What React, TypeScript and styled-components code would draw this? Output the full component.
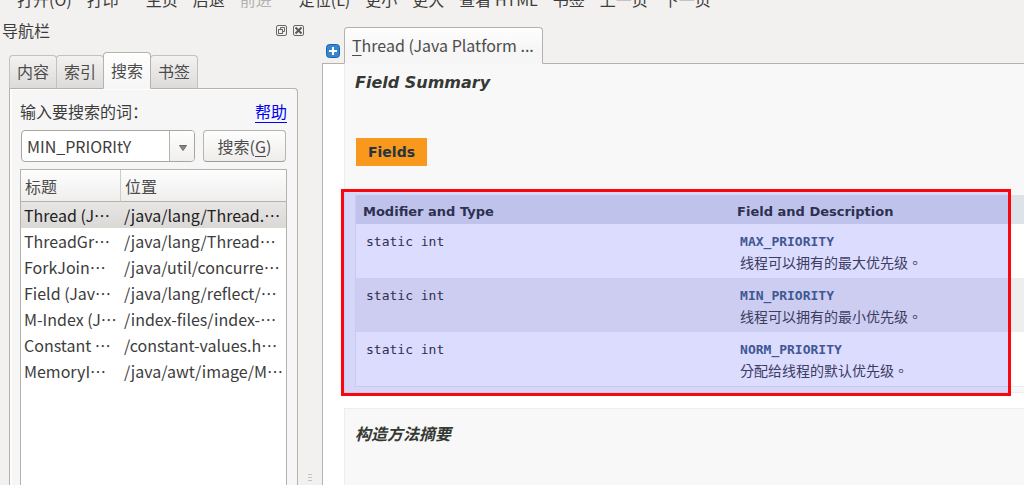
import React, { Fragment, useState } from "react";
import styled, { createGlobalStyle, css } from "styled-components";

const line = "#b5b2ac";
const chrome = "#f2f1ef";

const GlobalStyle = createGlobalStyle`
  *, *::before, *::after { box-sizing: border-box; }
  html, body { margin: 0; height: 100%; overflow: hidden; }
  #root { height: 100%; }
  body {
    background: ${chrome};
    color: #3c3c3c;
    font: 16px/24px "Noto Sans CJK SC", "Noto Sans", sans-serif;
  }
  button, input { font: inherit; color: inherit; margin: 0; }
`;

const Shell = styled.div`
  display: flex;
  flex-direction: column;
  height: 100vh;
  overflow: hidden;
`;

const Toolbar = styled.div`
  display: flex;
  align-items: flex-end;
  flex: none;
  gap: 15px;
  height: 11px;
  margin-bottom: 1px;
  padding-left: 17px;
  overflow: hidden;
`;

const ToolButton = styled.button<{ $group?: boolean }>`
  flex: none;
  padding: 0;
  margin-left: ${(p) => (p.$group ? 12 : 0)}px;
  border: 0;
  background: none;
  white-space: nowrap;
  line-height: 24px;
  &:disabled { color: #b4b2b0; }
`;

const Main = styled.div`
  display: flex;
  flex: 1;
  min-height: 0;
`;

const Dock = styled.aside`
  display: flex;
  flex-direction: column;
  flex: none;
  width: 308px;
  padding-top: 7px;
`;

const DockTitle = styled.div`
  display: flex;
  align-items: center;
  gap: 5px;
  height: 24px;
  padding: 0 3px 0 2px;
  & > span { flex: 1; padding-bottom: 2px; }
`;

const IconButton = styled.button`
  display: flex;
  padding: 0;
  border: 0;
  background: none;
`;

const Tabs = styled.div`
  display: flex;
  align-items: flex-end;
  height: 46px;
  margin-bottom: -1px;
  padding-left: 9px;
`;

const Tab = styled.button<{ $active?: boolean }>`
  position: relative;
  width: 48px;
  height: 34px;
  padding: 0 0 2px;
  margin-right: -1px;
  border: 1px solid #c4c1bc;
  border-bottom-color: ${line};
  border-radius: 4px 4px 0 0;
  background: linear-gradient(#f3f2f1, #dddbd9);
  color: #4c4c4c;
  ${(p) =>
    p.$active &&
    css`
      z-index: 1;
      height: 37px;
      border-color: ${line};
      border-bottom-color: #f6f6f6;
      background: linear-gradient(#fefefe, #f6f6f6);
    `}
`;

const Panel = styled.div`
  display: flex;
  flex-direction: column;
  flex: 1;
  margin: 0 10px 0 9px;
  padding: 10px 10px 0;
  border: 1px solid ${line};
  border-bottom: 0;
  border-radius: 0 4px 0 0;
  background: #f5f6f5;
  box-shadow: inset 2px 1px 0 #fcfcfc;
`;

const Prompt = styled.div`
  display: flex;
  justify-content: space-between;
  height: 31px;
  a { color: #0000f5; text-underline-offset: 4px; text-decoration-thickness: 1px; }
`;

const SearchRow = styled.div`
  display: flex;
  gap: 8px;
  height: 32px;
  padding: 0 1px;
`;

const Combo = styled.div`
  display: flex;
  flex: 1;
  min-width: 0;
  border: 1px solid #aaa69f;
  border-radius: 4px;
  background: #fff;
  overflow: hidden;
`;

const ComboInput = styled.input`
  flex: 1;
  min-width: 0;
  padding: 0 5px;
  border: 0;
  outline: 0;
  background: none;
`;

const ComboArrow = styled.button`
  display: flex;
  align-items: center;
  justify-content: center;
  width: 25px;
  padding: 3px 0 0 2px;
  border: 0;
  border-left: 1px solid ${line};
  background: linear-gradient(#fefefe, #f0efee);
`;

const PushButton = styled.button`
  width: 83px;
  padding: 0;
  border: 1px solid #b8b5af;
  border-bottom-color: #a09d96;
  border-radius: 4px;
  background: linear-gradient(#fefefe, #eeedeb);
  color: #4c4c4c;
`;

const Accel = styled.span`
  text-decoration: underline;
  text-decoration-thickness: 1px;
  text-underline-offset: 3px;
`;

const Results = styled.div`
  flex: 1;
  margin-top: 7px;
  border: 1px solid ${line};
  border-bottom: 0;
  background: #fff;
`;

const ResultTable = styled.table`
  width: 100%;
  table-layout: fixed;
  border-collapse: separate;
  border-spacing: 0;
  white-space: nowrap;
  th, td { overflow: hidden; text-align: left; }
  th {
    height: 32px;
    padding: 1px 4px 0;
    border-bottom: 1px solid ${line};
    background: linear-gradient(#fefefe, #efeeed);
    color: #4c4c4c;
    font-weight: 400;
  }
  th + th { border-left: 1px solid #cfccc8; }
  td {
    height: 26px;
    padding: 0 0 0 3px;
    font-family: "Noto Sans CJK TC", "Noto Sans CJK SC", sans-serif;
  }
  td + td { padding-left: 4px; }
  col:first-child { width: 99px; }
`;

const ResultRow = styled.tr<{ $selected?: boolean }>`
  background: ${(p) => (p.$selected ? "linear-gradient(#e8e6e4, #dbd9d6)" : "none")};
  color: ${(p) => (p.$selected ? "#202020" : "inherit")};
`;

const Splitter = styled.div`
  display: flex;
  flex-direction: column;
  justify-content: flex-end;
  gap: 2px;
  flex: none;
  width: 14px;
  padding-bottom: 4px;
`;

const Grip = styled.i`
  width: 4px;
  height: 1px;
  background: #c6c3bf;
`;

const Browser = styled.main`
  display: flex;
  flex-direction: column;
  flex: 1;
  min-width: 0;
`;

const BrowserTabs = styled.div`
  display: flex;
  align-items: flex-end;
  gap: 4px;
  height: 52px;
  margin-bottom: -1px;
  padding-left: 4px;
`;

const AddTab = styled(IconButton)`
  margin-bottom: 6px;
`;

const PageTab = styled.button`
  position: relative;
  z-index: 1;
  height: 37px;
  width: 199px;
  padding: 0 7px 2px;
  border: 1px solid ${line};
  border-bottom-color: #f7f7f7;
  border-radius: 4px 4px 0 0;
  background: linear-gradient(#fefefe, #f6f6f6 60%);
  color: #4c4c4c;
  text-align: left;
  white-space: nowrap;
`;

const Viewport = styled.div`
  flex: 1;
  min-height: 0;
  padding-left: 21px;
  border: 1px solid ${line};
  border-width: 1px 0 0 1px;
  background: #fff;
  color: #353833;
  font-family: "DejaVu Sans", "Noto Sans CJK SC", sans-serif;
  overflow: hidden;
`;

const Section = styled.section`
  padding: 7px 0 5px 10px;
  margin-bottom: 15px;
  border: 1px solid #ededed;
  border-right: 0;
  background: #f8f8f8;
  &:first-child { border-top: 0; }
  &:last-child { min-height: 240px; padding-top: 14px; }
`;

const Heading = styled.h3`
  margin: 0;
  font-size: 16px;
  line-height: 24px;
  font-style: italic;
  font-weight: 700;
`;

const Caption = styled.div`
  display: inline-block;
  margin: 43px 1px 29px;
  padding: 0 12px;
  background: #f8981d;
  color: #253441;
  font-size: 14px;
  line-height: 28px;
  font-weight: 700;
  vertical-align: top;
`;

const Marked = styled.div`
  position: relative;
`;

const Mark = styled.div`
  position: absolute;
  inset: -6px 13px -9px -14px;
  border: 3px solid #fb0510;
  background: rgba(0, 0, 255, 0.137);
  pointer-events: none;
`;

const FieldTable = styled.table`
  width: 100%;
  table-layout: fixed;
  border-collapse: separate;
  border-spacing: 0;
  border: 1px solid #ebebeb;
  border-width: 0 0 1px 1px;
  th {
    height: 29px;
    padding: 5px 7px 0;
    background: #dee3e9;
    font-size: 13px;
    line-height: 16px;
    text-align: left;
  }
  th:first-child { width: 56%; }
  td {
    height: 54px;
    padding: 8px 10px 0;
    background: #fff;
    vertical-align: top;
  }
  tr:nth-child(even) td { background: #eeeeef; }
`;

const Code = styled.code`
  display: block;
  font: 13px/20px "DejaVu Sans Mono", monospace;
  a { color: #4a6782; font-weight: 700; text-decoration: none; }
`;

const Description = styled.div`
  font: 14px/20px "Noto Sans CJK TC", sans-serif;
  color: #474747;
`;

const tools = [
  { label: "打开(O)" },
  { label: "打印" },
  { label: "主页", group: true },
  { label: "后退" },
  { label: "前进", disabled: true },
  { label: "定位(L)", group: true },
  { label: "更小" },
  { label: "更大" },
  { label: "查看 HTML" },
  { label: "书签" },
  { label: "上一页" },
  { label: "下一页" },
];

const tabs = ["内容", "索引", "搜索", "书签"];

const results = [
  ["Thread (J…", "/java/lang/Thread.…"],
  ["ThreadGr…", "/java/lang/Thread…"],
  ["ForkJoin…", "/java/util/concurre…"],
  ["Field (Jav…", "/java/lang/reflect/…"],
  ["M-Index (J…", "/index-files/index-…"],
  ["Constant …", "/constant-values.h…"],
  ["MemoryI…", "/java/awt/image/M…"],
];

const fields = [
  ["MAX_PRIORITY", "线程可以拥有的最大优先级。"],
  ["MIN_PRIORITY", "线程可以拥有的最小优先级。"],
  ["NORM_PRIORITY", "分配给线程的默认优先级。"],
];

export default function App() {
  const [query, setQuery] = useState("MIN_PRIORItY");
  return (
    <Fragment>
      <GlobalStyle />
      <Shell>
        <Toolbar role="toolbar">
          {tools.map((t) => (
            <ToolButton key={t.label} $group={t.group} disabled={t.disabled}>
              {t.label}
            </ToolButton>
          ))}
        </Toolbar>
        <Main>
          <Dock>
            <DockTitle>
              <span>导航栏</span>
              <IconButton aria-label="浮动">
                <svg width="12" height="12" viewBox="0 0 12 12" fill="none" stroke="#6a6865">
                  <rect x=".5" y=".5" width="10" height="10" rx="1.500" />
                  <path d="M4.500 4.500v-2h4v4h-2" />
                  <rect x="2.500" y="4.500" width="4" height="4" />
                </svg>
              </IconButton>
              <IconButton aria-label="关闭">
                <svg width="12" height="12" viewBox="0 0 12 12" fill="none" stroke="#6a6865">
                  <rect x=".5" y=".5" width="10" height="10" rx="1.500" />
                  <path d="M2.500 2.500l6 6M8.500 2.500l-6 6" stroke="#5b5956" strokeWidth="2" />
                </svg>
              </IconButton>
            </DockTitle>
            <Tabs role="tablist">
              {tabs.map((t) => (
                <Tab key={t} role="tab" aria-selected={t === "搜索"} $active={t === "搜索"}>
                  {t}
                </Tab>
              ))}
            </Tabs>
            <Panel role="tabpanel">
              <Prompt>
                <label htmlFor="query">输入要搜索的词：</label>
                <a href="#help">帮助</a>
              </Prompt>
              <SearchRow>
                <Combo>
                  <ComboInput id="query" value={query} onChange={(e) => setQuery(e.target.value)} />
                  <ComboArrow aria-label="历史">
                    <svg width="8" height="6" viewBox="0 0 8 6">
                      <path d="M.5.5h7L4 5.500z" fill="#8a8885" stroke="#6c6a67" />
                    </svg>
                  </ComboArrow>
                </Combo>
                <PushButton>
                  搜索(<Accel>G</Accel>)
                </PushButton>
              </SearchRow>
              <Results>
                <ResultTable>
                  <colgroup>
                    <col />
                    <col />
                  </colgroup>
                  <thead>
                    <tr>
                      <th>标题</th>
                      <th>位置</th>
                    </tr>
                  </thead>
                  <tbody lang="zh-TW">
                    {results.map(([title, path], i) => (
                      <ResultRow key={path} $selected={i === 0}>
                        <td>{title}</td>
                        <td>{path}</td>
                      </ResultRow>
                    ))}
                  </tbody>
                </ResultTable>
              </Results>
            </Panel>
          </Dock>
          <Splitter>
            <Grip />
            <Grip />
            <Grip />
          </Splitter>
          <Browser>
            <BrowserTabs>
              <AddTab aria-label="新标签">
                <svg width="14" height="14" viewBox="0 0 14 14">
                  <rect x=".5" y=".5" width="13" height="13" rx="3" fill="#3b86c8" stroke="#0f66ba" />
                  <path d="M7 3v8M3 7h8" stroke="#fff" strokeWidth="2" />
                </svg>
              </AddTab>
              <PageTab>
                <Accel>T</Accel>hread (Java Platform ...
              </PageTab>
            </BrowserTabs>
            <Viewport>
              <Section>
                <Heading>Field Summary</Heading>
                <Caption>Fields</Caption>
                <Marked>
                  <FieldTable>
                    <thead>
                      <tr>
                        <th>Modifier and Type</th>
                        <th>Field and Description</th>
                      </tr>
                    </thead>
                    <tbody>
                      {fields.map(([name, text]) => (
                        <tr key={name}>
                          <td>
                            <Code>static int</Code>
                          </td>
                          <td>
                            <Code>
                              <a href={"#" + name}>{name}</a>
                            </Code>
                            <Description>{text}</Description>
                          </td>
                        </tr>
                      ))}
                    </tbody>
                  </FieldTable>
                  <Mark />
                </Marked>
              </Section>
              <Section>
                <Heading>构造方法摘要</Heading>
              </Section>
            </Viewport>
          </Browser>
        </Main>
      </Shell>
    </Fragment>
  );
}
